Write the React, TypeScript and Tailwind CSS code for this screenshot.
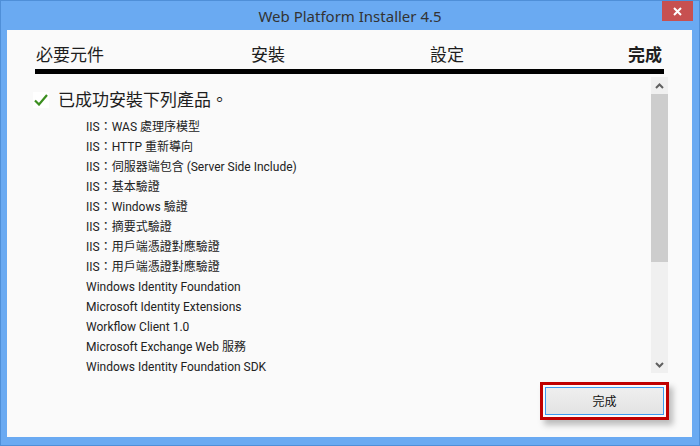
const items = [
  "IIS：WAS 處理序模型",
  "IIS：HTTP 重新導向",
  "IIS：伺服器端包含 (Server Side Include)",
  "IIS：基本驗證",
  "IIS：Windows 驗證",
  "IIS：摘要式驗證",
  "IIS：用戶端憑證對應驗證",
  "IIS：用戶端憑證對應驗證",
  "Windows Identity Foundation",
  "Microsoft Identity Extensions",
  "Workflow Client 1.0",
  "Microsoft Exchange Web 服務",
  "Windows Identity Foundation SDK",
];

const font = {
  fontFamily: '"Segoe UI", "Noto Sans", "Noto Sans CJK TC", sans-serif',
};

const Chevron = ({ down }: { down?: boolean }) => (
  <svg width="9" height="6" viewBox="0 0 9 6" className={down ? "rotate-180" : ""}>
    <path d="M1 5 L4.5 1.5 L8 5" fill="none" stroke="#606060" strokeWidth="2" />
  </svg>
);

export default function App() {
  return (
    <div
      className="w-[700px] h-[446px] bg-[#6aaaf2] border border-[#4f8fd8] flex flex-col text-[#1e1e1e]"
      style={font}
    >
      {/* title bar */}
      <div className="relative h-[29px] flex items-center justify-center shrink-0">
        <span className="text-[15px] text-[#333] pt-[1px]">Web Platform Installer 4.5</span>
        <div className="absolute top-0 right-[6px] w-[31px] h-[20px] bg-[#c75050] flex items-center justify-center">
          <svg width="9" height="9" viewBox="0 0 9 9">
            <path d="M1 1 L8 8 M8 1 L1 8" stroke="#fff" strokeWidth="2" />
          </svg>
        </div>
      </div>

      {/* client */}
      <div className="flex-1 ml-[6px] mr-[7px] mb-[8px] bg-[#fafafa] flex flex-col">
        {/* steps */}
        <div className="mx-[28px] mt-[12px] border-b-[5px] border-black h-[32px] flex items-start text-[17px] leading-[25px]">
          <span className="ml-[1px] w-[215px]">必要元件</span>
          <span className="w-[179px]">安裝</span>
          <span>設定</span>
          <span className="ml-auto mr-[2px] font-bold">完成</span>
        </div>

        {/* content */}
        <div className="mt-[3px] ml-[23px] mr-[24px] h-[296px] flex overflow-hidden">
          <div className="flex-1 overflow-hidden">
            <div className="flex items-center h-[21px] mt-[12px]">
              <div className="w-[16px] h-[16px] bg-white flex items-center justify-center ml-[3px]">
                <svg width="14" height="12" viewBox="0 0 14 12">
                  <path d="M1 6.5 L5 10.5 L13 1" fill="none" stroke="#3b8e1f" strokeWidth="2.2" />
                </svg>
              </div>
              <span className="ml-[9px] text-[17px] leading-[21px]">已成功安裝下列產品。</span>
            </div>
            <div
              className="ml-[56px] mt-[7px] text-[12px] leading-[20px] text-[#222]"
              style={{ fontFamily: 'Roboto, "Noto Sans CJK TC", sans-serif' }}
            >
              {items.map((t, i) => (
                <div key={i} className="whitespace-nowrap">{t}</div>
              ))}
            </div>
          </div>
          <div className="w-[17px] bg-[#f0f0f0] flex flex-col">
            <div className="h-[17px] flex items-center justify-center">
              <Chevron />
            </div>
            <div className="h-[168px] bg-[#cdcdcd]" />
            <div className="flex-1" />
            <div className="h-[17px] flex items-center justify-center">
              <Chevron down />
            </div>
          </div>
        </div>

        {/* footer */}
        <div className="flex justify-end mr-[23px] mt-[9px]">
          <div className="border-[3px] border-[#c00000] p-[2px] shadow-[4px_5px_6px_rgba(0,0,0,0.25)]">
            <button
              className="w-[119px] h-[28px] border border-[#3c9af0] bg-gradient-to-b from-[#efefef] to-[#e3e3e3] text-[12px] text-[#111]"
              style={{ fontFamily: '"Noto Sans CJK TC", sans-serif' }}
            >
              完成
            </button>
          </div>
        </div>
      </div>
    </div>
  );
}
